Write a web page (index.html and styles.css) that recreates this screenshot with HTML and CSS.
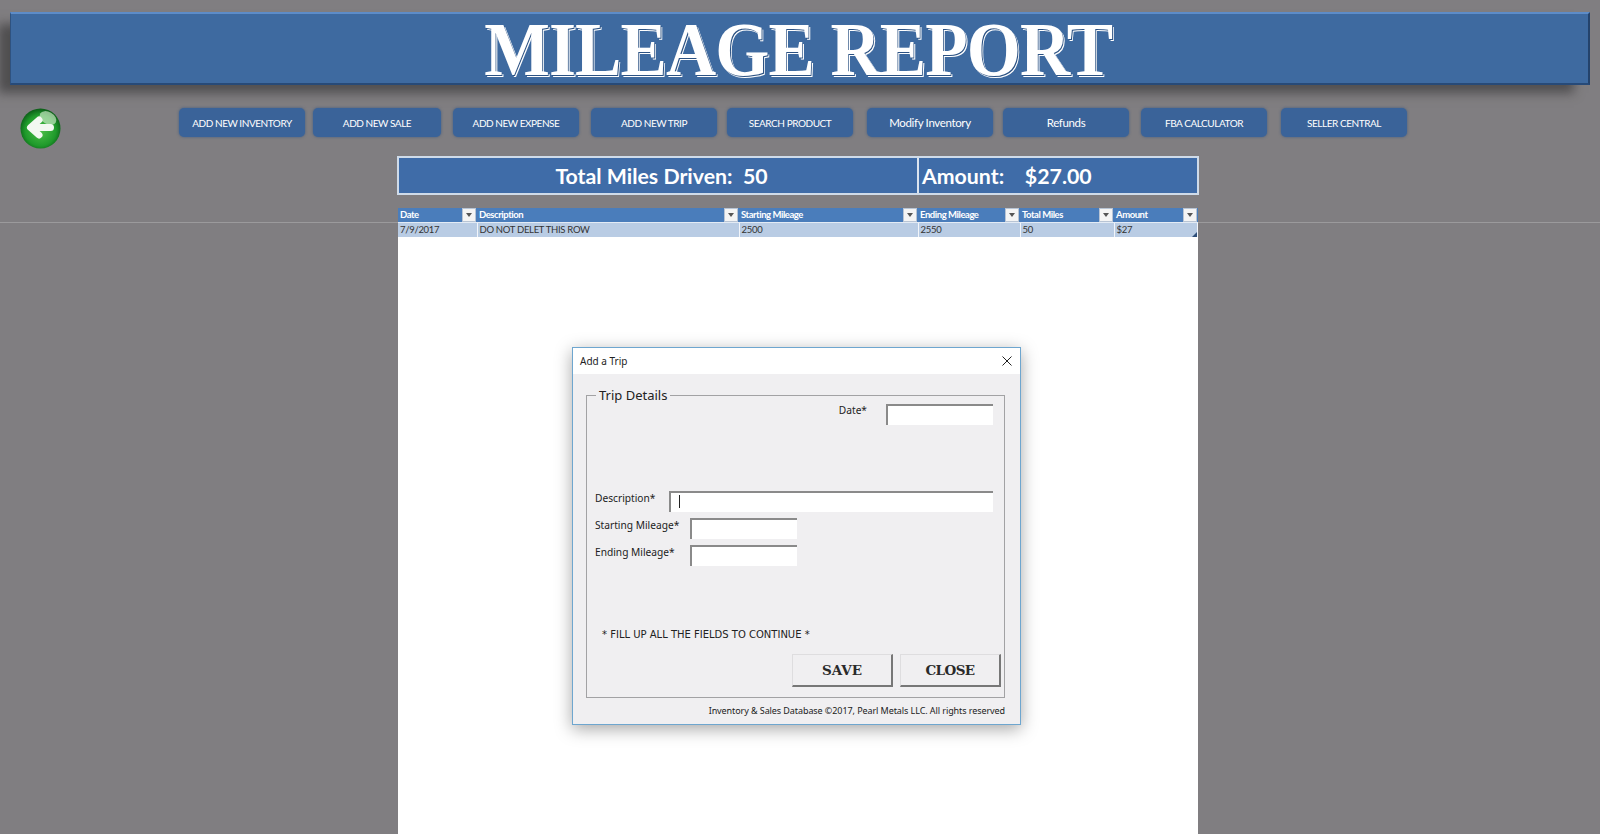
FILE: index.html
```html
<!DOCTYPE html>
<html lang="en">

<head>
    <meta charset="UTF-8">
    <title>Mileage Report</title>
    <link rel="stylesheet" href="styles.css">
</head>

<body>
    <header class="banner">
        <h1>MILEAGE REPORT</h1>
    </header>

    <div class="toolbar">
        <a class="back-btn" href="#">
            <svg viewBox="0 0 41 41" width="41" height="41">
                <defs>
                    <radialGradient id="orb" cx="50%" cy="55%" r="55%">
                        <stop offset="0%" stop-color="#4fc04a" />
                        <stop offset="70%" stop-color="#1f9a2b" />
                        <stop offset="100%" stop-color="#0b5c17" />
                    </radialGradient>
                </defs>
                <circle cx="20.5" cy="20.5" r="20" fill="url(#orb)" />
                <ellipse cx="28" cy="10" rx="9" ry="6" fill="#e4f5de" opacity="0.6" transform="rotate(30 28 10)" />
                <path d="M30.5 19.5H12M19 12L10.5 19.5L19 27" fill="none" stroke="#f3f8f1" stroke-width="7"
                    stroke-linecap="round" stroke-linejoin="round" />
            </svg>
        </a>
        <nav class="nav">
            <a class="nav-btn" href="#">ADD NEW INVENTORY</a>
            <a class="nav-btn wide gap-s" href="#">ADD NEW SALE</a>
            <a class="nav-btn gap-m" href="#">ADD NEW EXPENSE</a>
            <a class="nav-btn gap-m" href="#">ADD NEW TRIP</a>
            <a class="nav-btn gap-n" href="#">SEARCH PRODUCT</a>
            <a class="nav-btn gap-l mixed" href="#">Modify Inventory</a>
            <a class="nav-btn gap-n mixed" href="#">Refunds</a>
            <a class="nav-btn gap-m" href="#">FBA CALCULATOR</a>
            <a class="nav-btn gap-l" href="#">SELLER CENTRAL</a>
        </nav>
    </div>

    <div class="summary">
        <div class="summary-miles">Total Miles Driven:&nbsp; 50</div>
        <div class="summary-amount">Amount: &nbsp; &nbsp;$27.00</div>
    </div>

    <main class="sheet">
        <table class="trips">
            <colgroup>
                <col class="col-date">
                <col class="col-desc">
                <col class="col-start">
                <col class="col-end">
                <col class="col-total">
                <col class="col-amount">
            </colgroup>
            <thead>
                <tr>
                    <th>Date<span class="filter"></span></th>
                    <th>Description<span class="filter"></span></th>
                    <th>Starting Mileage<span class="filter"></span></th>
                    <th>Ending Mileage<span class="filter"></span></th>
                    <th>Total Miles<span class="filter"></span></th>
                    <th>Amount<span class="filter"></span></th>
                </tr>
            </thead>
            <tbody>
                <tr>
                    <td>7/9/2017</td>
                    <td>DO NOT DELET THIS ROW</td>
                    <td>2500</td>
                    <td>2550</td>
                    <td>50</td>
                    <td>$27<span class="resize-grip"></span></td>
                </tr>
            </tbody>
        </table>
    </main>

    <section class="dialog">
        <div class="dialog-title">
            <span>Add a Trip</span>
            <svg class="dialog-close" viewBox="0 0 10 10" width="10" height="10">
                <path d="M0.5 0.5L9.5 9.5M9.5 0.5L0.5 9.5" stroke="#222" stroke-width="1" fill="none" />
            </svg>
        </div>
        <fieldset class="group">
            <legend>Trip Details</legend>
            <div class="row row-date">
                <label>Date*</label>
                <div class="field field-short"></div>
            </div>
            <div class="row row-desc">
                <label>Description*</label>
                <div class="field field-wide"><span class="caret"></span></div>
            </div>
            <div class="row row-mileage">
                <label>Starting Mileage*</label>
                <div class="field field-short"></div>
            </div>
            <div class="row row-mileage">
                <label>Ending Mileage*</label>
                <div class="field field-short"></div>
            </div>
            <p class="note">* FILL UP ALL THE FIELDS TO CONTINUE *</p>
            <div class="actions">
                <button class="action-btn">SAVE</button>
                <button class="action-btn">CLOSE</button>
            </div>
        </fieldset>
        <p class="copyright">Inventory &amp; Sales Database ©2017, Pearl Metals LLC. All rights reserved</p>
    </section>
</body>

</html>
```

FILE: styles.css
```css
* {
    box-sizing: border-box;
}

body {
    margin: 0;
    height: 834px;
    overflow: hidden;
    display: flex;
    flex-direction: column;
    font-family: 'Noto Sans', Arial, sans-serif;
    background: linear-gradient(#9b9a9c, #9b9a9c) 0 222px / 100% 1px no-repeat, #807e81;
}

.banner {
    height: 73px;
    margin: 12px 10px 0;
    background: #3e6aa0;
    border-top: 2px solid #5d8cc8;
    border-left: 1px solid #2f527f;
    border-right: 2px solid #24436c;
    border-bottom: 2px solid #274a78;
    box-shadow: -14px 10px 10px -2px rgba(40, 40, 40, 0.55);
    display: flex;
    justify-content: center;
}

.banner h1 {
    margin: 0;
    font-family: 'Liberation Serif', serif;
    font-size: 76px;
    line-height: 70px;
    font-weight: bold;
    letter-spacing: -1px;
    color: #fff;
    text-shadow: 1px 1px 0 #2c5283, 2px 2px 0 #fff;
    transform: translateX(-1px) scaleX(0.915);
}

.toolbar {
    display: flex;
    align-items: flex-start;
    height: 40px;
    margin-top: 23px;
    padding-left: 20px;
}

.back-btn {
    display: block;
    width: 41px;
    height: 41px;
}

.nav {
    display: flex;
    margin-left: 118px;
}

.nav-btn {
    display: flex;
    align-items: center;
    justify-content: center;
    width: 126px;
    height: 29px;
    border-radius: 5px;
    background: #3a6399;
    box-shadow: 0 0 3px rgba(60, 90, 130, 0.9);
    color: #fff;
    font-family: 'Lato', sans-serif;
    font-size: 10px;
    letter-spacing: -0.45px;
    white-space: nowrap;
    text-decoration: none;
}

.nav-btn.mixed {
    font-size: 11.5px;
    letter-spacing: -0.35px;
}

.nav-btn.wide {
    width: 128px;
}

.gap-s {
    margin-left: 8px;
}

.gap-n {
    margin-left: 10px;
}

.gap-m {
    margin-left: 12px;
}

.gap-l {
    margin-left: 14px;
}

.summary {
    display: flex;
    width: 802px;
    height: 39px;
    margin: 8px 0 0 397px;
    border: 2px solid #cfdbe9;
    color: #fff;
    font-family: 'Lato', sans-serif;
    font-size: 21.3px;
    font-weight: bold;
    line-height: 36px;
    background: #3f6ca8;
}

.summary-miles {
    width: 520px;
    padding-left: 7px;
    text-align: center;
    border-right: 2px solid #dbe4ef;
}

.summary-amount {
    flex: 1;
    padding-left: 3px;
}

.sheet {
    flex: 1;
    width: 800px;
    margin: 13px 0 0 398px;
    background: #fff;
}

.trips {
    width: 100%;
    table-layout: fixed;
    border-collapse: collapse;
    font-family: 'Lato', sans-serif;
    font-size: 9.5px;
}

.col-date {
    width: 79px;
}

.col-desc {
    width: 262px;
}

.col-start {
    width: 179px;
}

.col-end {
    width: 102px;
}

.col-total {
    width: 94px;
}

.trips th {
    position: relative;
    height: 14px;
    padding: 0 0 0 2px;
    background: #4a7dbb;
    color: #fff;
    font-weight: bold;
    letter-spacing: -0.45px;
    text-align: left;
    border-bottom: 1px solid #e3ebf5;
}

.trips td {
    position: relative;
    height: 15px;
    padding: 0 0 0 2px;
    background: #b9cce4;
    color: #333;
    letter-spacing: -0.3px;
    border-right: 1px solid #f2f5fa;
}

.filter {
    position: absolute;
    top: 0;
    right: 1px;
    width: 14px;
    height: 14px;
    background: #f4f4f4;
    border: 1px solid #b8c4d4;
}

.filter::after {
    content: "";
    position: absolute;
    left: 3px;
    top: 4px;
    border-left: 3px solid transparent;
    border-right: 3px solid transparent;
    border-top: 4px solid #555;
}

.resize-grip {
    position: absolute;
    right: 0;
    bottom: 0;
    border-left: 5px solid transparent;
    border-bottom: 5px solid #2f4f7a;
}

.dialog {
    position: absolute;
    left: 572px;
    top: 347px;
    width: 449px;
    height: 378px;
    background: #f0eff1;
    border: 1px solid #6ea6cf;
    box-shadow: 0 4px 16px rgba(0, 0, 0, 0.35);
    color: #222;
    font-size: 10.2px;
}

.dialog-title {
    display: flex;
    align-items: center;
    justify-content: space-between;
    height: 26px;
    padding: 0 8px 0 7px;
    background: #fff;
    font-size: 10px;
}

.group {
    width: 419px;
    height: 311px;
    margin: 13px 0 0 13px;
    padding: 0;
    border: 1px solid #a2a2a4;
}

.group legend {
    margin-left: 9px;
    padding: 0 3px;
    font-size: 13px;
    line-height: 16px;
}

.row {
    display: flex;
    align-items: flex-start;
    line-height: 14px;
}

.row-date {
    justify-content: flex-end;
    gap: 19px;
    margin-top: 1px;
    padding-right: 11px;
}

.row-date label {
    margin-top: -1px;
}

.row-desc {
    margin-top: 66px;
    padding: 0 11px 0 8px;
}

.row-desc label {
    width: 74px;
}

.row-mileage {
    margin-top: 6px;
    padding-left: 8px;
}

.row-mileage label {
    width: 95px;
}

.field {
    height: 21px;
    background: #fff;
    border-top: 2px solid #8a8a8a;
    border-left: 2px solid #8a8a8a;
}

.field-short {
    width: 107px;
}

.field-wide {
    flex: 1;
    padding: 2px 0 0 8px;
}

.caret {
    display: block;
    width: 1px;
    height: 13px;
    background: #222;
}

.note {
    margin: 62px 0 0 15px;
    line-height: 14px;
    font-family: 'DejaVu Sans', sans-serif;
    font-size: 10px;
}

.actions {
    display: flex;
    justify-content: flex-end;
    gap: 7px;
    margin-top: 12px;
    padding-right: 3px;
}

.action-btn {
    width: 101px;
    height: 33px;
    padding: 0;
    background: #f0eff1;
    border: none;
    border-top: 1px solid #dedddf;
    border-left: 1px solid #dedddf;
    border-right: 2px solid #777;
    border-bottom: 2px solid #777;
    color: #2a2a2a;
    font-family: 'DejaVu Serif', serif;
    font-size: 13.5px;
    font-weight: bold;
}

.action-btn + .action-btn {
    letter-spacing: -0.6px;
}

.copyright {
    margin: 6px 15px 0 0;
    text-align: right;
    font-size: 9px;
    letter-spacing: -0.08px;
    line-height: 14px;
}
```
